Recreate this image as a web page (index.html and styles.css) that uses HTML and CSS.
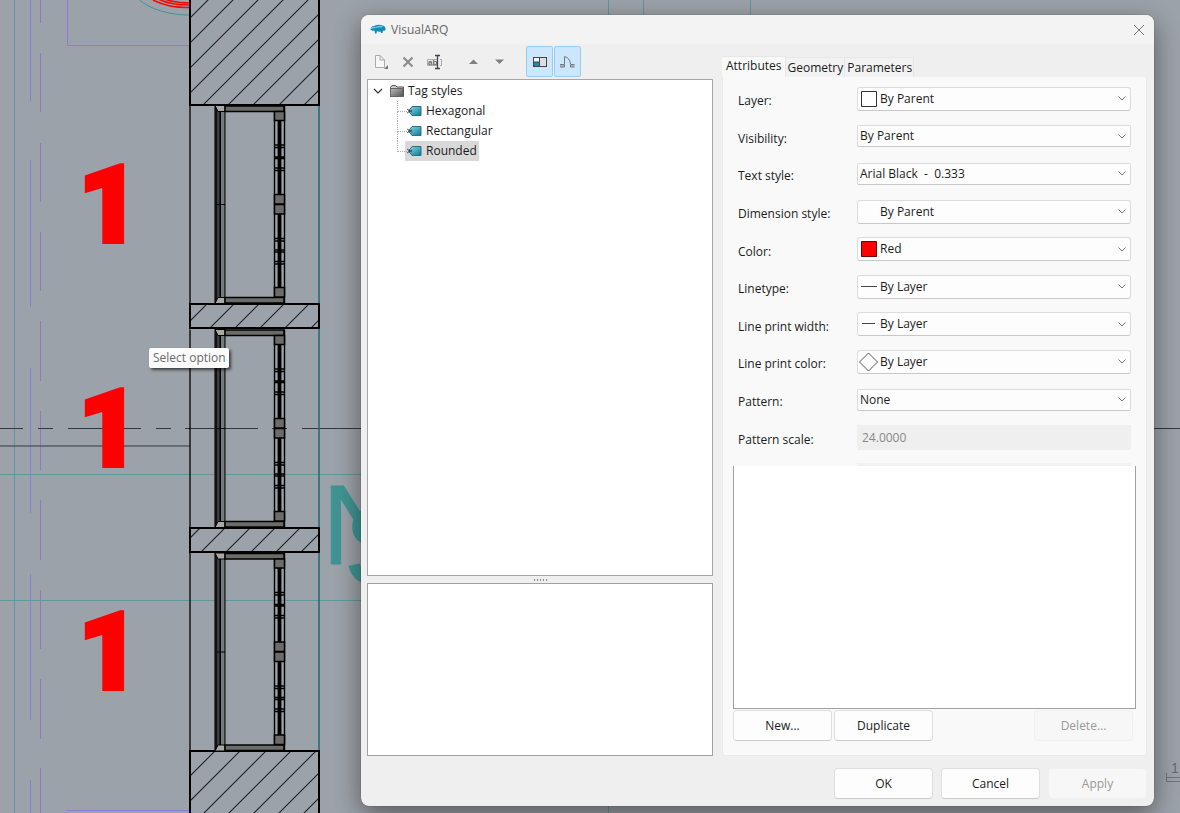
FILE: index.html
```html
<!DOCTYPE html>
<html lang="en">
<head>
<meta charset="utf-8">
<title>VisualARQ</title>
<link rel="stylesheet" href="styles.css">
</head>
<body>
<main class="desktop">
  <svg class="drawing" viewBox="0 0 1180 813" preserveAspectRatio="xMinYMin slice" aria-hidden="true">
    <defs>
      <g id="window">
        <path d="M0 0V199" stroke="#000" stroke-width="1.3"/>
        <rect x="24.5" y="0" width="10.500" height="198" fill="#55595d"/>
        <rect x="24.5" y="0" width="3" height="198" fill="#111"/>
        <rect x="27.5" y="5" width="3" height="188" fill="#3d4145"/>
        <rect x="29.5" y="5" width="1.6" height="188" fill="#000"/>
        <rect x="31" y="5" width="3.500" height="188" fill="#777b80"/>
        <path d="M35 0V198M27 99H35" stroke="#000"/>
        <path d="M25 0H35V6H28ZM28 192H35V198H25Z" fill="#aaa9a4" stroke="#000"/>
        <rect x="35" y=".5" width="59" height="5.5" fill="#6b6b69" stroke="#000" stroke-width="1.5"/>
        <rect x="35" y="192" width="59" height="5.5" fill="#6b6b69" stroke="#000" stroke-width="1.5"/>
        <path d="M84.500 6V192M94.500 0V198" stroke="#000" stroke-width="1.4"/>
        <path d="M89.500 15V184" stroke="#000" stroke-width="3.800"/>
        <path d="M84 39.500H95M84 42H95M84 51.500H95M84 53H95M84 62.500H95M84 65H95M84 133H95M84 135.500H95M84 144.500H95M84 146.500H95M84 156H95M84 158.500H95" stroke="#000" stroke-width="1.4"/>
        <path d="M84.500 6h10v9h-10zM84.500 89h10v9.500h-10zM84.500 99h10v9.500h-10zM84.500 182h10v9.500h-10z" fill="#6b6b69" stroke="#000" stroke-width="1.500"/>
      </g>
    </defs>
    <g fill="none" stroke="#459394">
      <path d="M14.500 0V813M0 474.500H361M0 600.500H361M608.500 0V16M643.500 0V16M750.500 0V16M608.500 804V813" stroke-width=".7"/>
      <path d="M137 -2C150 10 170 15 190 15"/>
    </g>
    <g fill="none" stroke="#8176db" stroke-width=".8">
      <path d="M30.500 0V101M30.500 160V307M30.500 368V513M30.500 574V720M30.500 780V813"/>
      <path d="M40.500 0V23M40.500 53V112M40.500 143V202M40.500 232V291M40.500 321V381M40.500 411V470M40.500 500V560M40.500 590V649M40.500 679V739M40.500 768V813" stroke="#906bd0"/>
    </g>
    <path d="M67.500 0V45.500H190M67 810.500H190" fill="none" stroke="#9078dc"/>
    <path d="M0 428.500H23M38 428.500H53M68 428.500H141M156 428.500H171M185 428.500H258M272 428.500H287M302 428.500H361M0 446H190M1154 428.500H1180" stroke="#33383c" fill="none"/>
    <g fill="none" stroke="#f00" stroke-width="1.500">
      <path d="M153 0C165 6 175 7.500 190 7.500M158 -1C168 4 178 5 190 5M164 -1C173 2 181 3 190 3"/>
    </g>
    <g class="sheet-letters"><text x="322" y="564">N</text><text x="344" y="585">S</text></g>
    <clipPath id="wall-top"><path d="M190 0H319V105H190Z"/></clipPath>
    <clipPath id="wall-a"><path d="M190 304H319V328H190Z"/></clipPath>
    <clipPath id="wall-b"><path d="M190 528H319V552H190Z"/></clipPath>
    <clipPath id="wall-end"><path d="M190 751H319V813H190Z"/></clipPath>
    <g stroke="#202326" stroke-width="1.1" fill="none">
      <path clip-path="url(#wall-top)" d="M180 28L230 -22M180 53L255 -22M180 78L280 -22M180 103L305 -22M180 128L330 -22M180 153L330 3M180 178L330 28M180 204L330 54M180 229L330 79"/>
      <path clip-path="url(#wall-a)" d="M190 321L210 301M208 330L237 301M233 330L262 301M258 330L287 301M283 330L312 301M309 330L338 301"/>
      <path clip-path="url(#wall-b)" d="M190 538L201 527M187 566L226 527M212 566L251 527M237 566L276 527M262 566L301 527M287 566L326 527M312 566L351 527"/>
      <path clip-path="url(#wall-end)" d="M190 776L220 746M190 801L245 746M190 827L271 746M190 852L296 746M190 877L321 746M190 902L330 762M190 927L330 787"/>
    </g>
    <g fill="none" stroke="#000" stroke-width="2">
      <path d="M190 0V105H319V0M190 304H319V328H190ZM190 528H319V552H190ZM190 813V751H319V813"/>
    </g>
    <path d="M319 106V303M319 329V527M319 553V750" stroke="#1f6a6b" stroke-width="1.500"/>
    <use href="#window" x="190" y="105.500"/>
    <use href="#window" x="190" y="329.500"/>
    <use href="#window" x="190" y="553"/>
    <g class="tag-numbers"><text x="78" y="242">1</text><text x="78" y="466">1</text><text x="78" y="689">1</text></g>
    <g fill="none" stroke="#70757b"><path d="M1166.500 773V782M1166 777.500H1180M1166 781.500H1180"/></g>
    <text class="dimension" x="1171" y="773">1</text>
  </svg>

  <div class="tooltip" role="tooltip">Select option</div>

  <section class="dialog" role="dialog" aria-labelledby="dialog-title">
    <header class="titlebar">
      <svg width="16" height="12" viewBox="0 0 16 12" aria-hidden="true"><path d="M1 5Q1 2 4 2Q8 0 11 1L14 2Q16 3 15.500 6L14 7L13 6.500L12.500 9H11L10.500 7.500Q8 8 7 7L6.500 9.500H5L4.500 6.500L2.500 7L0 5Z" fill="#168bb0"/><path d="M0 5Q2 2 5 3Q9 1 13 2L12 3.500Q7 3 4 4.500Z" fill="#62c7df"/></svg>
      <h1 id="dialog-title">VisualARQ</h1>
      <button class="close" type="button" aria-label="Close"><svg width="12" height="12" viewBox="0 0 12 12"><path d="M1 1L11 11M11 1L1 11" stroke="#777" fill="none"/></svg></button>
    </header>

    <div class="content">
      <div class="left">
        <div class="toolbar">
          <button type="button" aria-label="New style"><svg width="16" height="16" viewBox="0 0 16 16"><path d="M2.500 1.500H7L11.500 6V13.500H2.500ZM7 1.500V6H11.500" fill="#f7f7f7" stroke="#aaa"/><path d="M15 11V15H11Z" fill="#777"/></svg></button>
          <button type="button" aria-label="Delete style"><svg width="16" height="16" viewBox="0 0 16 16"><path d="M3.500 3.500L12.500 12.500M12.500 3.500L3.500 12.500" stroke="#8a8a8a" stroke-width="2"/></svg></button>
          <button type="button" aria-label="Rename style"><svg width="16" height="16" viewBox="0 0 16 16"><path d="M10 5.500H.5V11.500H10M13 5.500H14.500V11.500H13" fill="none" stroke="#aaa"/><text x="1" y="11" class="icon-text">ab</text><path d="M8 1.500H13M10.500 1.500V14.500M8 14.500H13" fill="none" stroke="#444" stroke-width="1.300"/></svg></button>
          <span class="gap"></span>
          <button type="button" aria-label="Move up"><svg width="16" height="16" viewBox="0 0 16 16"><path d="M3 10L7.500 5.500L12 10Z" fill="#808080"/></svg></button>
          <button type="button" aria-label="Move down"><svg width="16" height="16" viewBox="0 0 16 16"><path d="M2 5.500L6.500 10L11 5.500Z" fill="#808080"/></svg></button>
          <span class="gap"></span>
          <button class="on" type="button" aria-label="Show preview" aria-pressed="true"><svg width="16" height="16" viewBox="0 0 16 16"><rect x="1.500" y="3.500" width="13" height="9" fill="#ddd" stroke="#444"/><path d="M2 4H7V8H2Z" fill="#f5f5f5"/><path d="M2 8H7V12H2Z" fill="#168fad"/><path d="M7.500 4V12M2 8H7" stroke="#444"/></svg></button>
          <button class="on" type="button" aria-label="Show openings" aria-pressed="true"><svg width="16" height="16" viewBox="0 0 16 16"><path d="M4.500 10V2.500Q10 4 10.500 10" fill="none" stroke="#737b83"/><path d="M0 10.500H4.500V13H0M14.500 10.500H10.500V13H14.500" fill="#a9b2ba" stroke="#737b83"/></svg></button>
        </div>

        <div class="tree" role="tree">
          <div class="node root" role="treeitem" aria-expanded="true">
            <svg width="10" height="8" viewBox="0 0 10 8"><path d="M1 2L5 6L9 2" fill="none" stroke="#333" stroke-width="1.200"/></svg>
            <svg class="folder" width="16" height="14" viewBox="0 0 16 14"><defs><linearGradient id="gray" x2="1" y2="1"><stop stop-color="#bbb"/><stop offset="1" stop-color="#555"/></linearGradient></defs><path d="M1.500 12.500V3.500L3 1.500H6.500L8 3H14.500V12.500Z" fill="#ccc" stroke="#555"/><path d="M1.500 4.500H13.500V12.500H1.500Z" fill="url(#gray)" stroke="#666"/></svg>
            <span>Tag styles</span>
          </div>
          <div class="branch" role="group">
            <div class="node" role="treeitem"><svg class="tag" width="16" height="14" viewBox="0 0 16 14"><defs><linearGradient id="teal" x2="1" y2="1"><stop stop-color="#8bdae5"/><stop offset="1" stop-color="#087b91"/></linearGradient></defs><path d="M1.500 7L5 2.500H14V11.500H5Z" fill="url(#teal)" stroke="#287184"/><path d="M0 5L5 8M0 9L5 6" stroke="#333" stroke-width=".8"/></svg><span>Hexagonal</span></div>
            <div class="node" role="treeitem"><svg class="tag" width="16" height="14" viewBox="0 0 16 14"><path d="M1.500 7L5 2.500H14V11.500H5Z" fill="url(#teal)" stroke="#287184"/><path d="M0 5L5 8M0 9L5 6" stroke="#333" stroke-width=".8"/></svg><span>Rectangular</span></div>
            <div class="node selected" role="treeitem" aria-selected="true"><svg class="tag" width="16" height="14" viewBox="0 0 16 14"><path d="M1.500 7L5 2.500H14V11.500H5Z" fill="url(#teal)" stroke="#287184"/><path d="M0 5L5 8M0 9L5 6" stroke="#333" stroke-width=".8"/></svg><span>Rounded</span></div>
          </div>
        </div>
        <div class="splitter"><i></i><i></i><i></i><i></i><i></i></div>
        <div class="preview"></div>
      </div>

      <div class="right">
        <div class="tabs" role="tablist">
          <button class="active" type="button" role="tab" aria-selected="true">Attributes</button>
          <button type="button" role="tab">Geometry</button>
          <button type="button" role="tab">Parameters</button>
        </div>
        <div class="panel" role="tabpanel">
          <form class="fields">
            <div class="field"><label for="layer">Layer:</label><div class="combo icon"><svg width="18" height="18" viewBox="0 0 18 18"><path d="M1.500 1.500H16.500V16.500H1.500Z" fill="#fff" stroke="#333"/></svg><select id="layer"><option>By Parent</option></select></div></div>
            <div class="field"><label for="visibility">Visibility:</label><div class="combo"><select id="visibility"><option>By Parent</option></select></div></div>
            <div class="field"><label for="text-style">Text style:</label><div class="combo"><select id="text-style"><option>Arial Black &nbsp;- &nbsp;0.333</option></select></div></div>
            <div class="field"><label for="dimension">Dimension style:</label><div class="combo icon"><select id="dimension"><option>By Parent</option></select></div></div>
            <div class="field"><label for="color">Color:</label><div class="combo icon"><svg width="18" height="18" viewBox="0 0 18 18"><path d="M1.500 1.500H16.500V16.500H1.500Z" fill="#f00" stroke="#720000"/></svg><select id="color"><option>Red</option></select></div></div>
            <div class="field"><label for="linetype">Linetype:</label><div class="combo icon"><svg width="18" height="18" viewBox="0 0 18 18"><path d="M1 8.500H17" stroke="#444"/></svg><select id="linetype"><option>By Layer</option></select></div></div>
            <div class="field"><label for="print-width">Line print width:</label><div class="combo icon"><svg width="18" height="18" viewBox="0 0 18 18"><path d="M2 8.500H15" stroke="#444"/></svg><select id="print-width"><option>By Layer</option></select></div></div>
            <div class="field"><label for="print-color">Line print color:</label><div class="combo icon"><svg width="18" height="18" viewBox="0 0 18 18"><path d="M8.500 0L17.500 9L8.500 18L-.5 9Z" fill="#fff" stroke="#555"/></svg><select id="print-color"><option>By Layer</option></select></div></div>
            <div class="field"><label for="pattern">Pattern:</label><div class="combo"><select id="pattern"><option>None</option></select></div></div>
            <div class="field"><label for="pattern-scale">Pattern scale:</label><input id="pattern-scale" type="text" value="24.0000" disabled></div>
          </form>
          <div class="next-field"></div>
          <div class="listbox"></div>
          <div class="list-actions">
            <button class="push" type="button">New...</button>
            <button class="push" type="button">Duplicate</button>
            <button class="push last" type="button" disabled>Delete...</button>
          </div>
        </div>
      </div>
    </div>

    <footer class="actions">
      <button class="push" type="button">OK</button>
      <button class="push" type="button">Cancel</button>
      <button class="push" type="button" disabled>Apply</button>
    </footer>
  </section>
</main>
</body>
</html>
```
FILE: styles.css
```css
* { box-sizing: border-box; }
body { margin: 0; font: 12px/16px "Open Sans", "Noto Sans", sans-serif; color: #1c1c1c; }
button, input, select { font: inherit; color: inherit; margin: 0; }
svg { flex: none; overflow: visible; }

.desktop { position: relative; height: 100vh; min-height: 700px; overflow: hidden; background: #9ca2a9; }
.drawing { display: block; width: 100%; height: 100%; overflow: hidden; }
.tag-numbers { font: 900 108px Roboto, "Liberation Sans", sans-serif; fill: #f00; stroke: #f00; stroke-width: 4px; }
.sheet-letters { font: 113px "Liberation Sans", Arial, sans-serif; fill: #3f9593; stroke: #3f9593; stroke-width: 1px; }
.dimension { font: 14px "Liberation Sans", Arial, sans-serif; fill: #656a70; }

.tooltip { position: absolute; left: 149px; top: 348px; padding: 2px 3px 2px 4px; border-radius: 2px; background: #fbfbfb; color: #6a6a6a; box-shadow: 2px 2px 3px rgba(0, 0, 0, .6); }

.dialog { position: absolute; inset: 15px 26px 7px 361px; display: flex; flex-direction: column; border-radius: 8px; background: #efefef; box-shadow: 0 0 1px #333, 0 8px 26px rgba(0, 0, 0, .45); }
.titlebar { display: flex; align-items: center; gap: 5px; height: 29px; padding: 0 9px; border-radius: 8px 8px 0 0; background: #f3f3f3; }
.titlebar h1 { flex: 1; margin: 0; font-size: 12px; font-weight: 400; color: #666; }
.close { display: flex; padding: 0; border: 0; background: none; }

.content { flex: 1; display: grid; grid-template-columns: minmax(0, 346fr) minmax(0, 425fr); gap: 9px; min-height: 0; padding: 2px 7px 0 6px; }
.left, .right { display: flex; flex-direction: column; min-height: 0; }

.toolbar { display: flex; height: 33px; padding-bottom: 2px; }
.toolbar button { display: flex; align-items: center; justify-content: center; width: 27px; padding: 0; border: 1px solid transparent; background: none; }
.toolbar .gap { width: 12px; }
.toolbar .on { border-color: #99cdf5; border-radius: 2px; background: #cce6fc; }
.toolbar .on + .on { margin-left: 1px; }
.icon-text { font: bold 8px "Liberation Sans", sans-serif; fill: #666; }

.tree { flex: 1; padding: 1px 5px; border: 1px solid #a6a6a6; background: #fff; }
.node { display: flex; align-items: center; height: 20px; }
.root .folder { margin: 0 3px 0 6px; }
.branch { display: flex; flex-direction: column; align-items: flex-start; margin-left: 24px; }
.branch .node { position: relative; margin-left: 8px; padding-right: 2px; }
.branch .node::before { content: ""; position: absolute; left: -8px; top: 0; width: 9px; height: 10px; border: 1px dotted #aaa; border-width: 0 0 1px 1px; }
.branch .node:not(:last-child)::after { content: ""; position: absolute; left: -8px; top: 10px; height: 10px; border-left: 1px dotted #aaa; }
.tag { margin: 0 3px 0 2px; }
.selected { background: #d9d9d9; }
.splitter { display: flex; align-items: center; justify-content: center; gap: 2px; height: 7px; }
.splitter i { width: 1px; height: 2px; background: #888; }
.preview { height: 173px; border: 1px solid #a0a0a0; background: #fff; }

.right { padding-top: 10px; }
.tabs { display: flex; align-items: flex-end; height: 21px; }
.tabs button { height: 20px; padding: 0 1px 0 2px; border: 1px solid #e7e7e7; border-width: 1px 1px 0 0; background: #f2f2f2; }
.tabs .active { height: 21px; padding: 0 3px 2px 4px; background: #f9f9f9; }
.panel { flex: 1; display: flex; flex-direction: column; min-height: 0; padding: 3px 10px 14px; border: 1px solid #eaeaea; border-top: 0; border-radius: 0 0 3px 3px; background: #f9f9f9; }
.fields { flex: none; display: grid; grid-auto-rows: 1fr; height: 376px; padding: 0 5px; }
.field { display: grid; grid-template-columns: 119px minmax(0, 1fr); align-items: center; }
.field label { padding-top: 5px; }
.combo { position: relative; }
.combo svg { position: absolute; left: 3px; top: 3px; }
select { display: block; width: 100%; height: 22px; padding: 0 20px 0 2px; appearance: none; border: 1px solid #dcdcdc; border-bottom-color: #c8c8c8; border-radius: 2px; background: #fdfdfd url("data:image/svg+xml,%3Csvg xmlns='http://www.w3.org/2000/svg' width='8' height='5'%3E%3Cpath d='M.5 .5L4 4L7.500 .5' fill='none' stroke='%23777'/%3E%3C/svg%3E") no-repeat right 4px center; }
.icon select { height: 24px; padding-left: 22px; border-radius: 3px; }
.field input { width: 100%; height: 25px; padding: 0 5px; border: 0; background: #efefef; color: #888; }
.next-field { height: 3px; margin: 7px 5px 0 124px; background: #f2f2f2; }
.listbox { flex: 1; border: 1px solid #a0a0a0; border-top: 0; background: #fff; }
.list-actions { display: flex; gap: 2px; padding: 1px 3px 0 0; }
.list-actions .last { margin-left: auto; }

.push { width: 99px; height: 31px; padding: 0; border: 1px solid #dedede; border-bottom-color: #ccc; border-radius: 4px; background: #fdfdfd; }
.push:disabled { border-color: #f0f0f0; background: #f7f7f7; color: #999; }
.actions { display: flex; justify-content: flex-end; gap: 8px; padding: 12px 7px 7px; }
```
